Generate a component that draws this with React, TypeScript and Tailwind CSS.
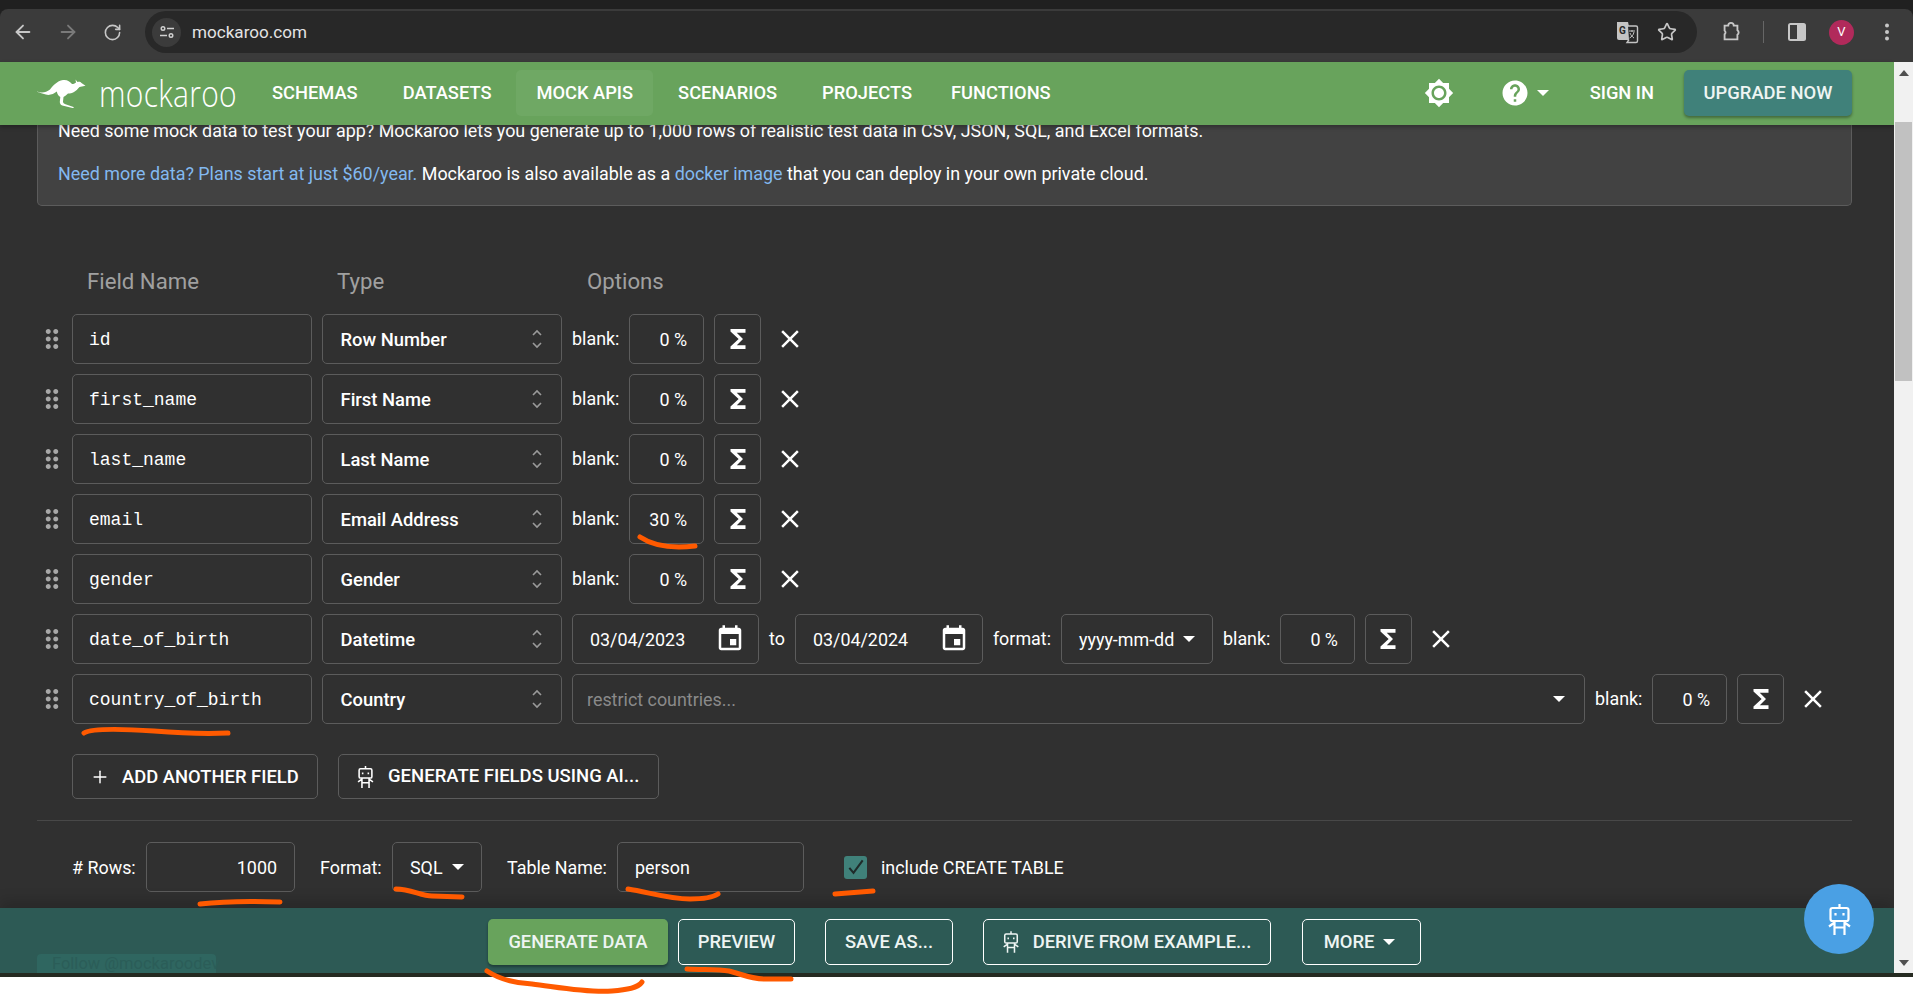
import { ArrowLeft, ArrowRight, RotateCw, Star, Plus } from "lucide-react";
import { FaTwitter } from "react-icons/fa";

const fields = [
  { name: "id", type: "Row Number", blank: "0 %" },
  { name: "first_name", type: "First Name", blank: "0 %" },
  { name: "last_name", type: "Last Name", blank: "0 %" },
  { name: "email", type: "Email Address", blank: "30 %" },
  { name: "gender", type: "Gender", blank: "0 %" },
];

function MuiIcon({ d, className }: { d: string; className?: string }) {
  return (
    <svg viewBox="0 0 24 24" fill="currentColor" className={className}>
      <path d={d} />
    </svg>
  );
}

function Robot({ className }: { className?: string }) {
  return (
    <svg viewBox="0 0 23 31" fill="none" stroke="currentColor" strokeWidth="2.2" className={className}>
      <path d="M11.5 0v4" />
      <rect x="2.500" y="4" width="18" height="13" rx="2" />
      <path d="M7.500 9v2.500M15.500 9v2.500" />
      <path d="M6.500 17v14M16.500 17v14M6.500 23.500h10M6.500 18.500L1 22.500M16.500 18.500L22 22.500" />
    </svg>
  );
}

function Caret({ className }: { className?: string }) {
  return <span className={`inline-block w-0 h-0 border-x-[6px] border-x-transparent border-t-[6px] border-t-white ${className ?? ""}`} />;
}

const sigma = "M18 4H6v2l6.5 6L6 18v2h12v-3h-7l5-5-5-5h7z";
const close = "M19 6.41 17.59 5 12 10.59 6.41 5 5 6.41 10.59 12 5 17.59 6.41 19 12 13.41 17.59 19 19 17.59 13.41 12z";
const drag = "M11 18c0 1.1-.9 2-2 2s-2-.9-2-2 .9-2 2-2 2 .9 2 2zm-2-8c-1.1 0-2 .9-2 2s.9 2 2 2 2-.9 2-2-.9-2-2-2zm0-6c-1.1 0-2 .9-2 2s.9 2 2 2 2-.9 2-2-.9-2-2-2zm6 4c1.1 0 2-.9 2-2s-.9-2-2-2-2 .9-2 2 .9 2 2 2zm0 2c-1.1 0-2 .9-2 2s.9 2 2 2 2-.9 2-2-.9-2-2-2zm0 6c-1.1 0-2 .9-2 2s.9 2 2 2 2-.9 2-2-.9-2-2-2z";
const calendar = "M17 12h-5v5h5v-5zM16 1v2H8V1H6v2H5c-1.11 0-1.99.9-1.99 2L3 19c0 1.1.89 2 2 2h14c1.1 0 2-.9 2-2V5c0-1.1-.9-2-2-2h-1V1h-2zm3 18H5V8h14v11z";

function Blank({ value }: { value: string }) {
  return (
    <>
      <span className="w-[47px] shrink-0 pt-[1px]">blank:</span>
      <div className="w-[75px] h-[50px] flex items-center justify-end pt-[2px] pr-[16px] border border-[#5c5c5c] rounded-[5px]">{value}</div>
      <button className="w-[47px] h-[50px] flex items-center justify-center border border-[#5c5c5c] rounded-[5px]">
        <MuiIcon d={sigma} className="w-[30px] h-[30px] text-white" />
      </button>
      <MuiIcon d={close} className="w-[30px] h-[30px] text-white ml-[4px]" />
    </>
  );
}

function FieldRow({ name, type, children }: { name: string; type: string; children: React.ReactNode }) {
  return (
    <div className="flex items-center h-[50px] gap-[10px]">
      <div className="w-[25px] flex justify-center text-[#a8a8a8]">
        <MuiIcon d={drag} className="w-[30px] h-[30px] shrink-0 ml-[5px]" />
      </div>
      <div className="w-[240px] h-[50px] flex items-center pt-[2px] pl-[16px] border border-[#5c5c5c] rounded-[5px] font-['Liberation_Mono',monospace] text-[18px]">{name}</div>
      <div className="w-[240px] h-[50px] flex items-center justify-between pl-[17.5px] pr-[18px] border border-[#5c5c5c] rounded-[5px] font-medium text-[18.4px]">
        <span className="pt-[2px]">{type}</span>
        <svg viewBox="0 0 12 24" fill="none" stroke="#9a9a9a" strokeWidth="1.6" className="w-[12px] h-[24px]">
          <path d="M2 8l4-4 4 4M2 16l4 4 4-4" />
        </svg>
      </div>
      {children}
    </div>
  );
}

function DateBox({ value, className }: { value: string; className?: string }) {
  return (
    <div className={`h-[50px] flex items-center justify-between pl-[17px] pr-[13px] border border-[#5c5c5c] rounded-[5px] ${className ?? ""}`}>
      <span className="pt-[2px]">{value}</span>
      <MuiIcon d={calendar} className="w-[30px] h-[30px] text-white" />
    </div>
  );
}

function OutlineBtn({ children, className }: { children: React.ReactNode; className?: string }) {
  return <button className={`h-[46px] flex items-center justify-center border border-white rounded-[5px] font-medium text-[18.4px] text-[#eef5f3] ${className ?? ""}`}>{children}</button>;
}

export default function App() {
  return (
    <div className="h-screen flex flex-col overflow-hidden bg-white relative font-['Roboto',sans-serif] text-[17.9px] text-white">
      {/* browser chrome */}
      <div className="h-[62px] bg-[#202020] pt-[9px] shrink-0">
        <div className="h-[53px] bg-[#3b3b3b] rounded-t-[8px] flex items-start pt-[2px] text-[#c7c7c7]">
          <div className="w-[45px] h-[42px] flex items-center justify-center"><ArrowLeft size={22} /></div>
          <div className="w-[45px] h-[42px] flex items-center justify-center text-[#7a7a7a]"><ArrowRight size={22} /></div>
          <div className="w-[45px] h-[42px] flex items-center justify-center"><RotateCw size={19} /></div>
          <div className="ml-[10px] w-[1552px] h-[42px] rounded-full bg-[#282828] flex items-center pl-[7px] pr-[20px]">
            <div className="w-[29px] h-[29px] rounded-full bg-[#3b3b3b] flex items-center justify-center">
              <svg viewBox="0 0 16 16" fill="none" stroke="#d0d0d0" strokeWidth="1.4" className="w-[16px] h-[16px]">
                <circle cx="4" cy="4.5" r="1.8" />
                <path d="M8 4.5h7M1 11.5h7" />
                <circle cx="12" cy="11.5" r="1.8" />
              </svg>
            </div>
            <span className="ml-[11px] mt-[2px] text-[17.1px] text-[#e3e3e3]">mockaroo.com</span>
            <svg viewBox="0 0 24 24" className="ml-auto w-[24px] h-[24px] mr-[1px]">
              <path d="M2 2h11l4 18H4a2 2 0 0 1-2-2z" fill="#c4c4c4" />
              <path d="M13 6h8a1.5 1.5 0 0 1 1.5 1.5V21a1.5 1.5 0 0 1-1.5 1.5H12l2-3" fill="#282828" stroke="#c4c4c4" strokeWidth="1.4" />
              <text x="4" y="14" fontSize="10" fontWeight="700" fill="#282828" fontFamily="Roboto, sans-serif">G</text>
              <path d="M14 11h6M17 10v2M19 12c-.5 3-2.500 5-4.500 6M15 13c.7 2 2.300 4 4 5" fill="none" stroke="#c4c4c4" strokeWidth="1" />
            </svg>
            <Star size={20} strokeWidth={2} className="ml-[17px]" />
          </div>
          <div className="h-[42px] flex items-center ml-[23px]">
            <svg viewBox="0 0 24 24" fill="none" stroke="#c7c7c7" strokeWidth="2" className="w-[22px] h-[22px]">
              <path d="M5 5h4a3 3 0 0 1 6 0h4v5a3 3 0 0 1 0 5v5H5v-5.500a2.500 2.500 0 0 0 0-4z" />
            </svg>
            <div className="w-[1px] h-[22px] bg-[#666] ml-[21px]" />
            <svg viewBox="0 0 20 20" className="w-[20px] h-[20px] ml-[23px]">
              <rect x="1" y="1" width="18" height="18" rx="2.500" fill="#c7c7c7" />
              <rect x="3" y="3" width="7" height="14" fill="#3b3b3b" />
            </svg>
            <div className="w-[25px] h-[25px] rounded-full bg-[#b12a5b] ml-[22px] flex items-center justify-center text-[13px] text-white">V</div>
            <svg viewBox="0 0 4 18" className="w-[4px] h-[18px] ml-[31px]" fill="#c7c7c7">
              <circle cx="2" cy="2.500" r="2" />
              <circle cx="2" cy="9" r="2" />
              <circle cx="2" cy="15.500" r="2" />
            </svg>
          </div>
        </div>
      </div>

      <div className="h-[911px] flex shrink-0">
        <div className="flex-1 min-w-0 flex flex-col bg-[#303030]">
          {/* site header */}
          <header className="relative z-10 h-[63px] shrink-0 bg-[#68a35c] shadow-[0_2px_4px_rgba(0,0,0,0.3)] flex items-center pl-[37px] pr-[42px] pb-[1px] font-medium">
            <svg viewBox="0 0 49 29" fill="white" className="w-[49px] h-[29px] shrink-0">
              <path d="M0 12.500c5 2 9 1 13-2 3-4 7-8.500 13-9.500 4-.6 7 1.500 9 4 1.500 0 2.500-.5 4-1.500l-.5-3 2 2.500c1.500-.5 3-.5 4 1l4 2.700-6 1.300c-2 2-3.500 4-5.500 5-2 1.500-4 1.500-6 1.500-1.500 1.500-3 2.500-4.500 3.500l-.5 4.500c0 1.500 1 2.300 2.500 2.800l8 2.700.3 1.300-11.500-2.700c-1.500-.5-2.500-2-2.500-3.500l.5-5c-2-1-3-3-3.500-5.500-3 2.500-7 4-11 3-3-.8-6-2-9-2.900z" />
            </svg>
            <span className="ml-[13px] font-['Open_Sans',sans-serif] font-light text-[30px] leading-none tracking-[0.3px] scale-y-[1.25] origin-center w-[153px]">mockaroo</span>
            <nav className="flex items-center gap-[5px] text-[18.3px] uppercase">
              <span className="px-[20px] h-[46px] flex items-center pb-[1px]">Schemas</span>
              <span className="px-[20px] h-[46px] flex items-center pb-[1px]">Datasets</span>
              <span className="px-[20px] h-[46px] flex items-center pb-[1px] rounded-[5px] bg-[#6fa864]">Mock APIs</span>
              <span className="px-[20px] h-[46px] flex items-center pb-[1px]">Scenarios</span>
              <span className="px-[20px] h-[46px] flex items-center pb-[1px]">Projects</span>
              <span className="px-[20px] h-[46px] flex items-center pb-[1px] ml-[-6px]">Functions</span>
            </nav>
            <div className="ml-auto flex items-center">
              <MuiIcon d="M20 8.690V4h-4.690L12 .690 8.690 4H4v4.690L.690 12 4 15.310V20h4.690L12 23.310 15.310 20H20v-4.690L23.310 12 20 8.690zM12 18c-3.310 0-6-2.690-6-6s2.690-6 6-6 6 2.690 6 6-2.690 6-6 6zm0-10c-2.210 0-4 1.790-4 4s1.790 4 4 4 4-1.790 4-4-1.790-4-4-4z" className="w-[30px] h-[30px]" />
              <MuiIcon d="M12 2C6.480 2 2 6.480 2 12s4.480 10 10 10 10-4.480 10-10S17.520 2 12 2zm1 17h-2v-2h2v2zm2.070-7.750l-.9.920C13.450 12.900 13 13.500 13 15h-2v-.5c0-1.100.450-2.100 1.170-2.830l1.240-1.260c.370-.360.590-.860.590-1.410 0-1.100-.9-2-2-2s-2 .9-2 2H8c0-2.210 1.790-4 4-4s4 1.790 4 4c0 .880-.360 1.680-.930 2.250z" className="w-[30px] h-[30px] ml-[46px]" />
              <Caret className="ml-[7px]" />
              <span className="ml-[41px] text-[18.3px] uppercase">Sign in</span>
              <button className="ml-[30px] w-[168px] h-[46px] rounded-[5px] bg-[#40817a] shadow-[0_2px_3px_rgba(0,0,0,0.35)] text-[18.4px] uppercase text-[#eef5f3]">Upgrade now</button>
            </div>
          </header>

          {/* form body */}
          <main className="flex-1 min-h-0 pl-[37px] pr-[42px] flex flex-col">
            <div className="h-[81px] bg-[#424242] border-x border-b border-[#5c5c5c] rounded-b-[5px] pl-[20px] leading-[26px]">
              <p className="mt-[-7px]">Need some mock data to test your app? Mockaroo lets you generate up to 1,000 rows of realistic test data in CSV, JSON, SQL, and Excel formats.</p>
              <p className="mt-[17px]">
                <span className="text-[#83b9f0]">Need more data? Plans start at just $60/year.</span> Mockaroo is also available as a <span className="text-[#83b9f0]">docker image</span> that you can deploy in your own private cloud.
              </p>
            </div>

            <div className="flex mt-[62px] mb-[18px] h-[28px] items-center pl-[50px] text-[22.2px] text-[#a0a0a0]">
              <span className="w-[250px]">Field Name</span>
              <span className="w-[250px]">Type</span>
              <span>Options</span>
            </div>

            <div className="flex flex-col gap-[10px]">
              {fields.map((f) => (
                <FieldRow key={f.name} name={f.name} type={f.type}>
                  <Blank value={f.blank} />
                </FieldRow>
              ))}
              <FieldRow name="date_of_birth" type="Datetime">
                <DateBox value="03/04/2023" className="w-[187px]" />
                <span className="pt-[1px]">to</span>
                <DateBox value="03/04/2024" className="w-[188px]" />
                <span className="pt-[1px]">format:</span>
                <div className="w-[152px] h-[50px] flex items-center justify-between px-[17px] border border-[#5c5c5c] rounded-[5px]">
                  <span className="pt-[2px]">yyyy-mm-dd</span>
                  <Caret />
                </div>
                <Blank value="0 %" />
              </FieldRow>
              <FieldRow name="country_of_birth" type="Country">
                <div className="w-[1013px] h-[50px] flex items-center justify-between pl-[14px] pr-[19px] border border-[#5c5c5c] rounded-[5px] text-[#8a8a8a]">
                  <span className="pt-[2px]">restrict countries...</span>
                  <Caret />
                </div>
                <Blank value="0 %" />
              </FieldRow>
            </div>

            <div className="flex mt-[30px] ml-[35px] gap-[20px]">
              <button className="w-[246px] h-[45px] flex items-center pl-[17px] gap-[12px] border border-[#5c5c5c] rounded-[5px] font-medium text-[18.4px]">
                <Plus size={20} strokeWidth={1.75} />
                ADD ANOTHER FIELD
              </button>
              <button className="w-[321px] h-[45px] flex items-center pl-[18px] gap-[14px] border border-[#5c5c5c] rounded-[5px] font-medium text-[18.5px]">
                <Robot className="w-[17px] h-[22px]" />
                GENERATE FIELDS USING AI...
              </button>
            </div>

            <div className="h-[1px] bg-[#484848] mt-[21px]" />

            <div className="flex items-center mt-[21px] h-[50px] pl-[35px]">
              <span className="w-[64px] pt-[2px]"># Rows:</span>
              <div className="ml-[10px] w-[149px] h-[50px] flex items-center justify-end pt-[2px] pr-[17px] border border-[#5c5c5c] rounded-[5px]">1000</div>
              <span className="ml-[25px] w-[63px] pt-[2px]">Format:</span>
              <div className="ml-[9px] w-[90px] h-[50px] flex items-center pl-[17px] gap-[9px] border border-[#5c5c5c] rounded-[5px]">
                <span className="pt-[2px]">SQL</span>
                <Caret />
              </div>
              <span className="ml-[25px] w-[100px] pt-[2px]">Table Name:</span>
              <div className="ml-[10px] w-[187px] h-[50px] flex items-center pt-[2px] pl-[17px] border border-[#5c5c5c] rounded-[5px]">person</div>
              <div className="ml-[40px] w-[23px] h-[23px] rounded-[3px] bg-[#40817a] flex items-center justify-center">
                <svg viewBox="0 0 24 24" fill="none" stroke="#1f2b2a" strokeWidth="2.500" className="w-[20px] h-[20px]">
                  <path d="M4 13l5 6L20 4" />
                </svg>
              </div>
              <span className="ml-[14px] pt-[2px]">include CREATE TABLE</span>
            </div>
          </main>

          {/* action bar */}
          <footer className="relative h-[65px] shrink-0 bg-[#2d5a55] shadow-[0_-8px_12px_rgba(0,0,0,0.15)] flex items-center justify-center pl-[15px] pt-[2px] overflow-hidden">
            <div className="absolute left-[37px] top-[46px] w-[179px] h-[19px] rounded-t-[4px] bg-[#2f6660] pl-[9px] flex items-center gap-[6px] text-[16.5px] leading-[19px] whitespace-nowrap text-[#2b5d58]">
              <FaTwitter className="w-[15px] h-[15px]" />
              Follow @mockaroodev
            </div>
            <button className="w-[180px] h-[46px] rounded-[5px] bg-[#68a35c] shadow-[0_2px_3px_rgba(0,0,0,0.35)] font-medium text-[18.2px] text-[#eef5f3]">GENERATE DATA</button>
            <OutlineBtn className="w-[117px] ml-[10px]">PREVIEW</OutlineBtn>
            <OutlineBtn className="w-[128px] ml-[30px]">SAVE AS...</OutlineBtn>
            <OutlineBtn className="w-[288px] ml-[30px] gap-[14px]">
              <Robot className="w-[16px] h-[22px]" />
              DERIVE FROM EXAMPLE...
            </OutlineBtn>
            <OutlineBtn className="w-[119px] ml-[31px] gap-[9px] pr-[4px]">
              MORE
              <Caret />
            </OutlineBtn>
          </footer>
        </div>

        {/* scrollbar */}
        <div className="w-[19px] shrink-0 bg-[#f1f1f1] flex flex-col items-center pt-[8px] relative z-20">
          <span className="w-0 h-0 border-x-[5px] border-x-transparent border-b-[6px] border-b-[#505050]" />
          <div className="mt-[46px] w-[17px] h-[259px] bg-[#c1c1c1]" />
          <span className="mt-auto mb-[7px] w-0 h-0 border-x-[5px] border-x-transparent border-t-[6px] border-t-[#505050]" />
        </div>
      </div>
      <div className="h-[4px] bg-[#262b22] shrink-0" />

      {/* chat bubble */}
      <div className="absolute left-[1804px] top-[884px] w-[70px] h-[70px] rounded-full bg-[#4aa0e4] z-30 flex items-center justify-center">
        <Robot className="w-[23px] h-[31px] text-white" />
      </div>

      {/* hand drawn marks on the screenshot */}
      <svg className="absolute inset-0 w-full h-full z-40 pointer-events-none" fill="none" stroke="#ff5a00" strokeWidth="5" strokeLinecap="round" strokeLinejoin="round">
        <path d="M640 537c12 8 30 12 55 9" />
        <path d="M84 733c8-5 40-4 70-2 25 2 50 3 74 2" />
        <path d="M200 904c25-3 55-3 80-2" />
        <path d="M396 889c15 0 25 7 36 7l30 1" />
        <path d="M628 889c20 3 40 10 62 10 12 0 22-1 28-5" />
        <path d="M835 894l38-3" />
        <path d="M487 971c12 8 25 12 45 13 25 3 55 9 80 7 15-1 26-3 30-9" />
        <path d="M687 969c15 1 30 0 42 2 12 3 22 8 36 8h26" />
      </svg>
    </div>
  );
}
